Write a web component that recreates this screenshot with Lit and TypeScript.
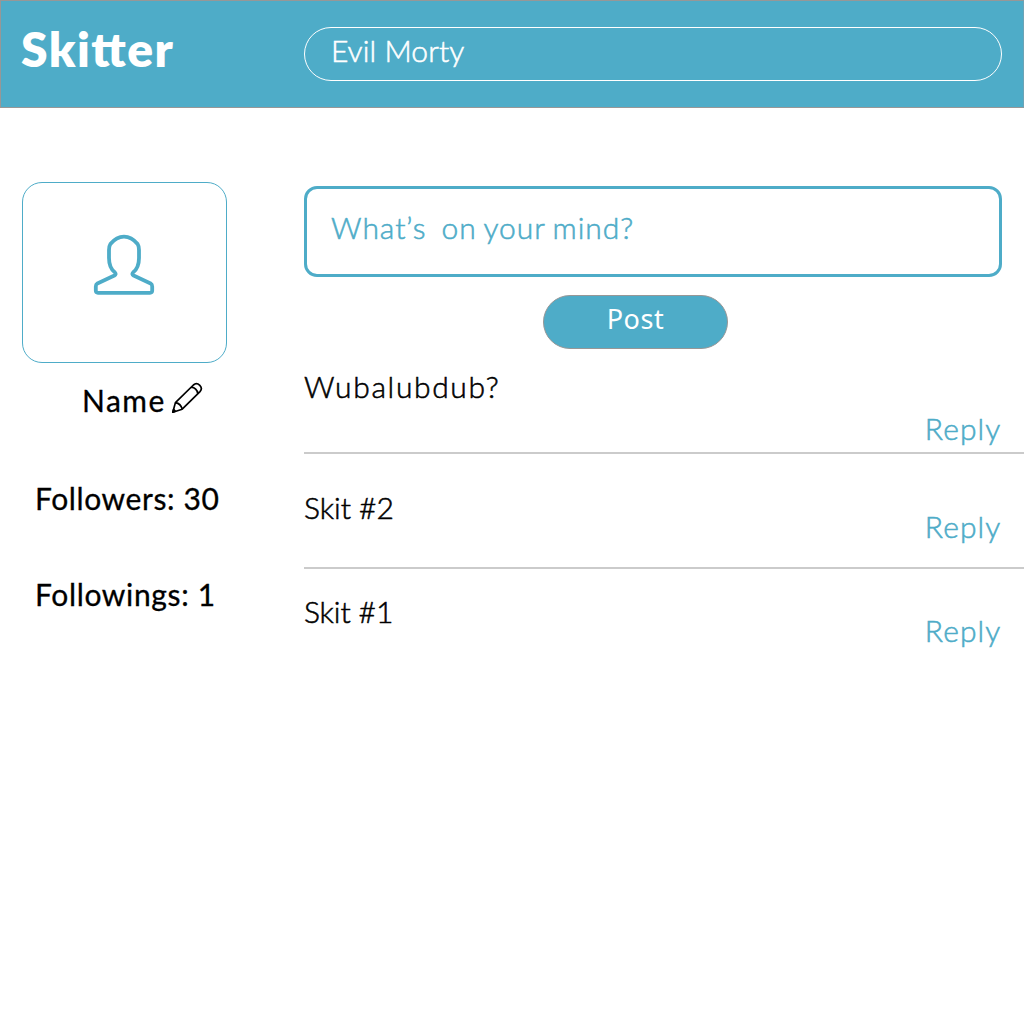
import { LitElement, html, css } from "lit";
import { customElement } from "lit/decorators.js";
import { classMap } from "lit/directives/class-map.js";

interface Skit {
  text: string;
  size: "first" | "middle" | "last";
}

const SKITS: Skit[] = [
  { text: "Wubalubdub?", size: "first" },
  { text: "Skit #2", size: "middle" },
  { text: "Skit #1", size: "last" },
];

@customElement("app-root")
export class AppRoot extends LitElement {
  static styles = css`
    :host {
      display: block;
      width: 1024px;
      height: 1024px;
      overflow: hidden;
      background: #fff;
      color: #000;
      font: 400 30px/40px Lato, "Open Sans", sans-serif;
      --accent: #4eacc8;
      --edge: #979797;
    }
    * { box-sizing: border-box; }
    .light { font-weight: 300; -webkit-text-stroke: 0.55px currentColor; }
    .header {
      display: grid;
      grid-template-columns: 303px 698px;
      height: 108px;
      background: var(--accent);
      border: 1px solid var(--edge);
      border-right-color: #6ca3b5;
      color: #fff;
    }
    .brand {
      padding: 19px 0 0 20px;
      font-size: 48px;
      line-height: 58px;
      font-weight: 800;
      letter-spacing: 1.4px;
    }
    .tie { letter-spacing: 0; margin-right: 1.4px; }
    .search {
      height: 54px;
      margin-top: 26px;
      padding: 2px 0 0 26px;
      border: 1px solid #fff;
      border-radius: 27px;
      letter-spacing: 0.1px;
    }
    .body { display: grid; grid-template-columns: 304px 720px; }
    .sidebar { padding-top: 74px; -webkit-text-stroke: 0.3px currentColor; }
    .avatar {
      display: flex;
      justify-content: center;
      width: 205px;
      height: 181px;
      margin-left: 22px;
      padding: 51px 2px 0 0;
      border: 1px solid var(--accent);
      border-radius: 20px;
    }
    .avatar svg { width: 62px; height: 62px; }
    .name {
      display: flex;
      gap: 4px;
      margin-top: 17px;
      padding-left: 82px;
      letter-spacing: 1.5px;
    }
    .name svg { width: 34px; height: 34px; margin-top: 1px; }
    .stat { padding-left: 35px; letter-spacing: 0.6px; }
    .followers { margin-top: 58px; }
    .followings { margin-top: 56px; letter-spacing: 0.65px; }
    .main { padding-top: 78px; }
    .composer {
      width: 698px;
      height: 91px;
      padding: 18px 0 0 24px;
      border: 3px solid var(--accent);
      border-radius: 13px;
      color: var(--accent);
      letter-spacing: 0.95px;
      word-spacing: -1.6px;
      white-space: pre;
    }
    .post {
      display: block;
      width: 185px;
      height: 54px;
      margin: 18px 0 0 239px;
      padding: 0 0 6px;
      border: 1px solid var(--edge);
      border-radius: 27px;
      background: var(--accent);
      color: #fff;
      font: 400 27px/40px "Noto Sans", "Open Sans", sans-serif;
      letter-spacing: 0.6px;
      text-align: center;
    }
    .skit {
      display: flex;
      justify-content: space-between;
      border-bottom: 2px solid #cbcbcb;
    }
    .reply { padding: 19px 22.5px 0 0; color: var(--accent); letter-spacing: 1.1px; }
    .first { height: 105px; padding-top: 17px; }
    .first .text { letter-spacing: 1.65px; }
    .first .reply { padding-top: 42px; }
    .middle { height: 115px; padding-top: 33px; }
    .last { padding-top: 22px; border-bottom: 0; }
    .last .text { letter-spacing: -0.1px; }
  `;

  private skit({ text, size }: Skit) {
    return html`
      <article class=${classMap({ skit: true, light: true, [size]: true })}>
        <span class="text">${text}</span>
        <span class="reply">Reply</span>
      </article>`;
  }

  render() {
    return html`
      <header class="header">
        <div class="brand">Ski<span class="tie">tt</span>er</div>
        <div class="search light">Evil Morty</div>
      </header>
      <div class="body">
        <aside class="sidebar">
          <div class="avatar">
            <svg viewBox="93 234 62 62" fill="none" stroke="#4eacc8" stroke-width="3.8" stroke-linejoin="round">
              <path d="M124 236.6C129 236.6 134 239.6 137.6 244C138.8 245.8 139 247 139 250V258C139 265 137 269.5 133 272.6C132 273.8 132.2 274.8 133.6 275.6L150.6 283.4C152 284.2 152.2 285 152.2 286.4V290.6C152.2 292 151.6 292.8 150 292.8H98C96.4 292.8 95.8 292 95.8 290.6V286.4C95.8 285 96 284.2 97.4 283.4L114.400 275.600C115.800 274.800 116 273.800 115 272.600C111 269.500 109 265 109 258V250C109 247 109.200 245.800 110.400 244C114 239.600 119 236.600 124 236.600Z"/>
            </svg>
          </div>
          <div class="name">
            <span>Name</span>
            <svg viewBox="170 381 34 34" fill="none" stroke="#000" stroke-width="1.7" stroke-linejoin="round">
              <path d="M172.800 412.200L175.400 402.600L193.400 385C195.400 383.200 198 383.600 199.800 385.400C201.600 387.200 201.800 389.600 200 391.600L182.200 409.200Z M175.400 402.600C178.800 403.200 181.400 405.600 182.200 409.200 M191.200 387.200C194.800 387.600 197.200 390 197.800 393.600"/>
              <path d="M172.800 412.200L173.600 409.400L175.400 411.300Z" fill="#000"/>
            </svg>
          </div>
          <div class="stat followers">Followers: 30</div>
          <div class="stat followings">Followings: 1</div>
        </aside>
        <main class="main">
          <div class="composer light">What’s  on your mind?</div>
          <button class="post">Post</button>
          ${SKITS.map((s) => this.skit(s))}
        </main>
      </div>`;
  }
}
